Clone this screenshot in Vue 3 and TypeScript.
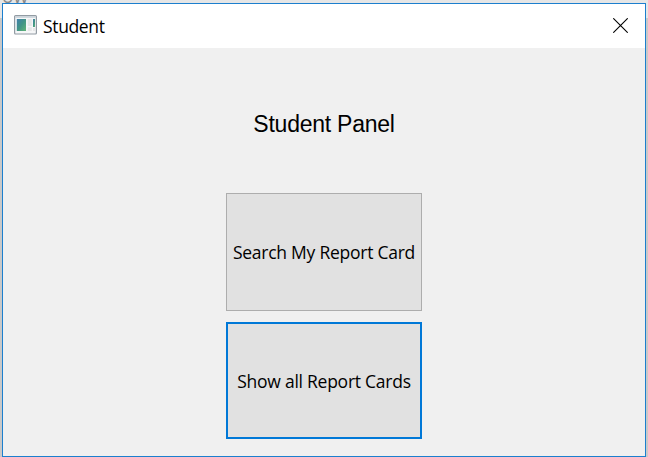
<script setup lang="ts">
import { ref } from 'vue'

interface PanelAction {
  id: string
  label: string
}

const actions: PanelAction[] = [
  { id: 'search', label: 'Search My Report Card' },
  { id: 'all', label: 'Show all Report Cards' },
]
const selected = ref<string>('all')
</script>

<template>
  <div class="desktop">
    <span class="behind">ow</span>
    <section class="window">
      <header class="titlebar">
        <svg class="app-icon" width="23" height="20" viewBox="0 0 23 20">
          <defs>
            <linearGradient id="pane" x1="0" y1="0" x2="1" y2="1">
              <stop offset="0" stop-color="#427fac" />
              <stop offset="0.5" stop-color="#419486" />
              <stop offset="1" stop-color="#62b578" />
            </linearGradient>
          </defs>
          <rect x="0.6" y="0.6" width="21.8" height="18.4" rx="1" fill="#f6f7f8" stroke="#929ba3" stroke-width="1.2" />
          <path d="M1.2 2h20.6" stroke="#c8d1d9" stroke-width="1.6" />
          <rect x="2.8" y="4" width="9.2" height="12" fill="url(#pane)" />
          <rect x="13.8" y="4" width="4" height="7" fill="#e6e7e8" />
          <rect x="13.8" y="12.3" width="4" height="3.7" fill="#e6e7e8" />
          <rect x="19" y="4" width="2" height="8" fill="url(#pane)" />
          <rect x="19" y="13" width="2" height="3" fill="#e6e7e8" />
        </svg>
        <span class="title">Student</span>
        <button class="close" aria-label="Close">
          <svg width="15" height="15" viewBox="0 0 15 15">
            <path d="M0.3 0.3L14.7 14.7M14.7 0.3L0.3 14.7" stroke="#000" stroke-width="1.1" />
          </svg>
        </button>
      </header>
      <main class="content">
        <h1 class="heading">Student Panel</h1>
        <button
          v-for="action in actions"
          :key="action.id"
          class="action"
          :class="[action.id, { focused: selected === action.id }]"
          @click="selected = action.id"
        ><span class="label">{{ action.label }}</span></button>
      </main>
    </section>
  </div>
</template>

<style>
body {
  overflow: hidden;
}
</style>

<style scoped>
.desktop {
  position: relative;
  box-sizing: border-box;
  width: 648px;
  height: 457px;
  padding: 3px 2px 0;
  background: linear-gradient(#e6e6e6 0 18px, #c9c9c9 18px);
  overflow: hidden;
}
.behind {
  position: absolute;
  left: 2px;
  top: -14px;
  font: 19px/20px "Open Sans", sans-serif;
  color: #888;
}
.window {
  position: relative;
  box-sizing: border-box;
  display: flex;
  flex-direction: column;
  width: 644px;
  height: 454px;
  border: 1px solid #1c7fce;
  background: #f0f0f0;
}
.titlebar {
  display: flex;
  align-items: center;
  box-sizing: border-box;
  height: 44px;
  padding: 0 17px 0 11px;
  background: #fff;
}
.app-icon {
  flex: none;
  margin-top: -3px;
}
.title {
  margin-left: 6px;
  font: 17.5px/24px "Open Sans", sans-serif;
  letter-spacing: -0.35px;
  color: #000;
}
.close {
  display: flex;
  margin: 0 0 2px auto;
  padding: 0;
  border: 0;
  background: none;
}
.content {
  display: flex;
  flex-direction: column;
  align-items: center;
}
.heading {
  margin: 61px 0 0;
  height: 84px;
  font: 400 23px/30px "Liberation Sans", sans-serif;
  letter-spacing: -0.25px;
  color: #000;
}
.action {
  display: flex;
  align-items: center;
  justify-content: center;
  box-sizing: border-box;
  width: 196px;
  height: 118px;
  padding: 0;
  border: 1px solid #adadad;
  border-radius: 0;
  background: #e1e1e1;
  font: 17.5px/24px "Open Sans", sans-serif;
  letter-spacing: -0.25px;
  white-space: nowrap;
  color: #000;
}
.action.all {
  height: 117px;
  margin-top: 11px;
}
.action.focused {
  border: 2px solid #0078d7;
  outline: none;
}
</style>
